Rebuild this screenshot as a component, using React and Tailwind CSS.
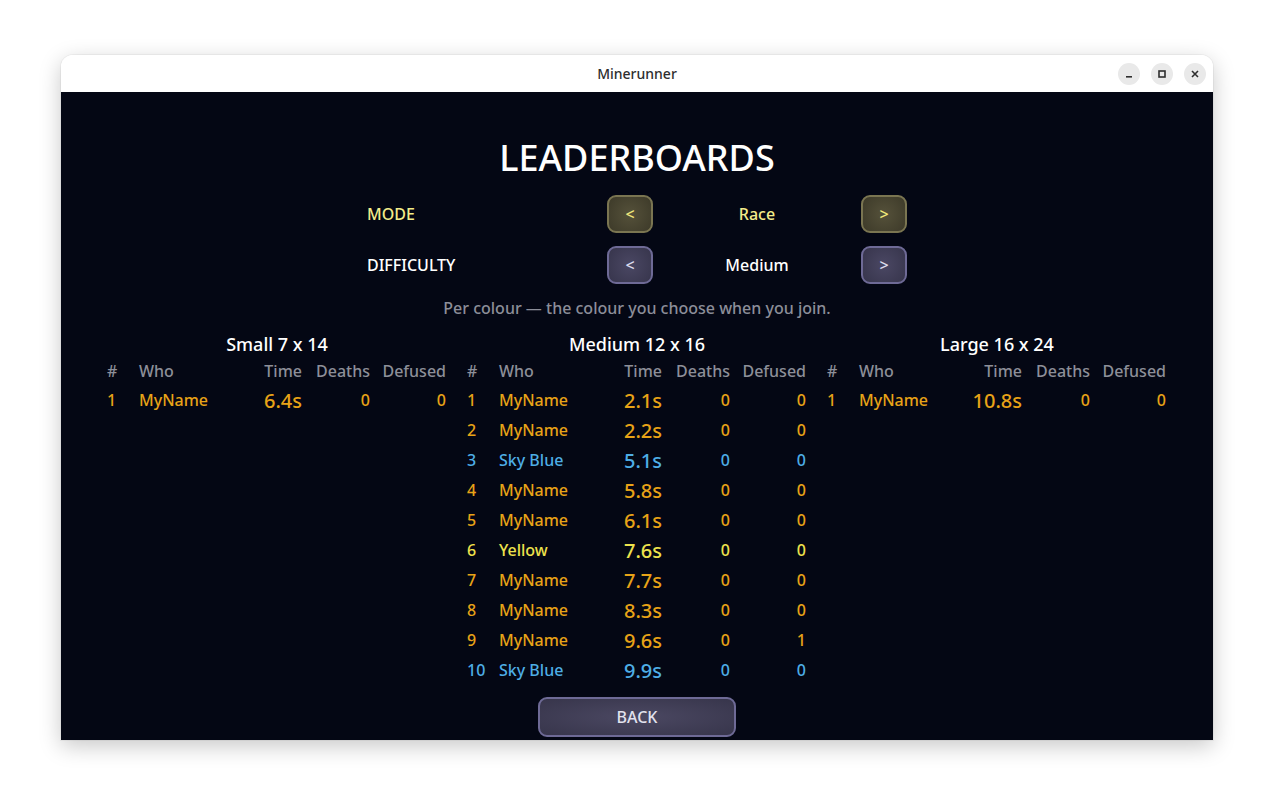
import React from "react";

const ORANGE = "text-[#e8a317]";
const BLUE = "text-[#4eaee6]";
const YELLOW = "text-[#eee24c]";

const boards = [
  {
    title: "Small 7 x 14",
    rows: [{ n: 1, who: "MyName", time: "6.4s", deaths: 0, defused: 0, c: ORANGE }],
  },
  {
    title: "Medium 12 x 16",
    rows: [
      { n: 1, who: "MyName", time: "2.1s", deaths: 0, defused: 0, c: ORANGE },
      { n: 2, who: "MyName", time: "2.2s", deaths: 0, defused: 0, c: ORANGE },
      { n: 3, who: "Sky Blue", time: "5.1s", deaths: 0, defused: 0, c: BLUE },
      { n: 4, who: "MyName", time: "5.8s", deaths: 0, defused: 0, c: ORANGE },
      { n: 5, who: "MyName", time: "6.1s", deaths: 0, defused: 0, c: ORANGE },
      { n: 6, who: "Yellow", time: "7.6s", deaths: 0, defused: 0, c: YELLOW },
      { n: 7, who: "MyName", time: "7.7s", deaths: 0, defused: 0, c: ORANGE },
      { n: 8, who: "MyName", time: "8.3s", deaths: 0, defused: 0, c: ORANGE },
      { n: 9, who: "MyName", time: "9.6s", deaths: 0, defused: 1, c: ORANGE },
      { n: 10, who: "Sky Blue", time: "9.9s", deaths: 0, defused: 0, c: BLUE },
    ],
  },
  {
    title: "Large 16 x 24",
    rows: [{ n: 1, who: "MyName", time: "10.8s", deaths: 0, defused: 0, c: ORANGE }],
  },
];

const COLS = "grid grid-cols-[32px_95px_68px_68px_76px]";

function Board({ title, rows }) {
  return (
    <div className="w-[340px] flex flex-col">
      <div className="h-[24px] leading-[24px] text-center text-[18px] text-white">
        {title}
      </div>
      <div className={`${COLS} mt-[3px] h-[24px] items-center text-[16px] text-[#8d8f99]`}>
        <span>#</span>
        <span>Who</span>
        <span className="text-right">Time</span>
        <span className="text-right">Deaths</span>
        <span className="text-right">Defused</span>
      </div>
      {rows.map((r) => (
        <div key={r.n} className={`${COLS} h-[30px] items-center text-[16px] ${r.c}`}>
          <span>{r.n}</span>
          <span className="whitespace-nowrap">{r.who}</span>
          <span className="text-right text-[20px] leading-[30px] pt-[3px]">{r.time}</span>
          <span className="text-right">{r.deaths}</span>
          <span className="text-right">{r.defused}</span>
        </div>
      ))}
    </div>
  );
}

function StepButton({ children, tone }) {
  const styles =
    tone === "gold"
      ? "border-[#7a7551] bg-[radial-gradient(circle,#55513a_0%,#3d3a29_100%)] text-[#efe77a]"
      : "border-[#6e6a96] bg-[radial-gradient(circle,#4a4763_0%,#37354c_100%)] text-[#dcdcec]";
  return (
    <button
      className={`w-[46px] h-[38px] rounded-[9px] border-[2.5px] flex items-center justify-center text-[16px] ${styles}`}
    >
      {children}
    </button>
  );
}

function OptionRow({ label, value, tone }) {
  const text = tone === "gold" ? "text-[#f3ec8a]" : "text-white";
  return (
    <div className="grid grid-cols-[240px_46px_208px_46px] items-center w-[540px]">
      <span className={`text-[16px] ${text}`}>{label}</span>
      <StepButton tone={tone}>&lt;</StepButton>
      <span className={`text-center text-[16px] ${text}`}>{value}</span>
      <StepButton tone={tone}>&gt;</StepButton>
    </div>
  );
}

function WinButton({ children }) {
  return (
    <div className="w-[22px] h-[22px] rounded-full bg-[#e9e9e9] flex items-center justify-center text-[#2e2e2e]">
      {children}
    </div>
  );
}

export default function App() {
  return (
    <div className="w-[1274px] h-[807px] bg-white pt-[55px] pl-[61px] font-['Noto_Sans','Open_Sans',sans-serif]">
      <div className="w-[1152px] h-[685px] flex flex-col rounded-t-[12px] overflow-hidden shadow-[0_6px_22px_rgba(0,0,0,0.22),0_0_0_1px_rgba(0,0,0,0.04)]">
        {/* title bar */}
        <div className="h-[37px] bg-white flex items-center relative shrink-0">
          <div className="absolute inset-0 flex items-center justify-center text-[14px] font-medium text-[#2e2e2e]">
            Minerunner
          </div>
          <div className="ml-auto mr-[7px] flex gap-[11px] relative">
            <WinButton>
              <svg width="10" height="10" viewBox="0 0 10 10">
                <rect x="2" y="7" width="6" height="1.6" fill="currentColor" />
              </svg>
            </WinButton>
            <WinButton>
              <svg width="10" height="10" viewBox="0 0 10 10">
                <rect x="2" y="2" width="6" height="6" fill="none" stroke="currentColor" strokeWidth="1.6" />
              </svg>
            </WinButton>
            <WinButton>
              <svg width="10" height="10" viewBox="0 0 10 10">
                <path d="M2 2 L8 8 M8 2 L2 8" stroke="currentColor" strokeWidth="1.6" />
              </svg>
            </WinButton>
          </div>
        </div>

        {/* game surface */}
        <div className="flex-1 bg-[#040714] flex flex-col items-center pt-[44px] font-medium">
          <h1 className="text-[36px] leading-[44px] text-white">LEADERBOARDS</h1>
          <div className="mt-[15px] flex flex-col gap-[13px]">
            <OptionRow label="MODE" value="Race" tone="gold" />
            <OptionRow label="DIFFICULTY" value="Medium" tone="violet" />
          </div>
          <p className="mt-[14px] text-[16px] leading-[20px] text-[#8c8e99]">
            Per colour — the colour you choose when you join.
          </p>
          <div className="mt-[14px] flex gap-[20px] items-start">
            {boards.map((b) => (
              <Board key={b.title} {...b} />
            ))}
          </div>
          <button className="mt-[14px] w-[198px] h-[40px] rounded-[9px] border-[2.5px] border-[#6e6a96] bg-[radial-gradient(ellipse_at_center,#4b4862_0%,#37354b_100%)] text-[16px] text-[#e2e2ee]">
            BACK
          </button>
        </div>
      </div>
    </div>
  );
}
